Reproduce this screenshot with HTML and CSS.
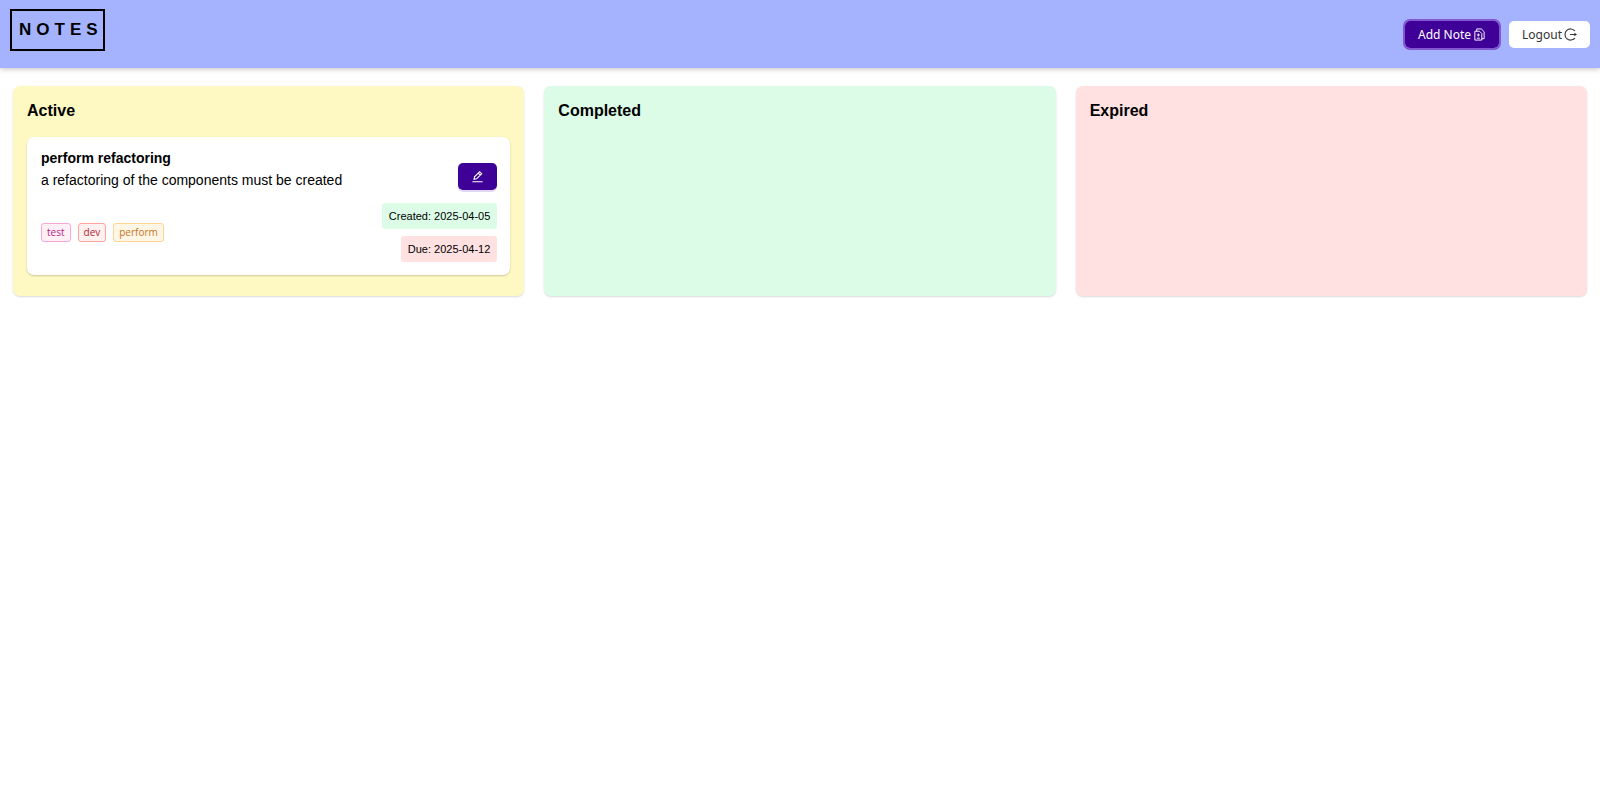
FILE: index.html
```html
<!DOCTYPE html>
<html lang="en">
<head>
<meta charset="utf-8">
<meta name="viewport" content="width=device-width, initial-scale=1">
<title>Notes</title>
<link rel="stylesheet" href="styles.css">
</head>
<body>
<header class="topbar">
  <h1 class="logo">NOTES</h1>
  <nav class="actions">
    <button type="button" class="btn btn-primary btn-active">Add Note
      <svg class="icon" viewBox="0 0 14 14" fill="none" stroke="currentColor" aria-hidden="true"><path d="M2 3.5H7L9.5 6V13H2ZM4 3.5V1H9L12 4V11.5H9.5M4.2 7.5H7.4M5.8 5.9V9.1M4.2 11H7.4"/></svg>
    </button>
    <button type="button" class="btn">Logout
      <svg class="icon" viewBox="0 0 14 14" fill="none" stroke="currentColor" stroke-width="1.2" aria-hidden="true"><path d="M11.7 3.2A6 6 0 1 0 11.7 10.8M6.5 7H12"/><path d="M11.2 5L14 7L11.2 9Z" fill="currentColor" stroke="none"/></svg>
    </button>
  </nav>
</header>
<main class="board">
  <section class="column column-active">
    <h2 class="column-title">Active</h2>
    <article class="card">
      <div class="card-row card-head">
        <div>
          <h3 class="card-title">perform refactoring</h3>
          <p>a refactoring of the components must be created</p>
        </div>
        <button type="button" class="btn btn-primary btn-edit" aria-label="Edit note">
          <svg class="icon" viewBox="0 0 14 14" fill="none" stroke="currentColor" stroke-width="1.2" aria-hidden="true"><path d="M1.5 12.7H12.5M3.3 10L3.8 7.3L9.3 1.8L11.5 4L6 9.5ZM7.8 3.3L10 5.5"/></svg>
        </button>
      </div>
      <div class="card-row card-foot">
        <ul class="tags">
          <li class="tag tag-magenta">test</li>
          <li class="tag tag-red">dev</li>
          <li class="tag tag-orange">perform</li>
        </ul>
        <div class="dates">
          <span class="date date-created">Created: 2025-04-05</span>
          <span class="date date-due">Due: 2025-04-12</span>
        </div>
      </div>
    </article>
  </section>
  <section class="column column-completed">
    <h2 class="column-title">Completed</h2>
  </section>
  <section class="column column-expired">
    <h2 class="column-title">Expired</h2>
  </section>
</main>
</body>
</html>
```
FILE: styles.css
```css
* {
  box-sizing: border-box;
  margin: 0;
}

body {
  background: #fff;
  color: #000;
  font: 14px/20px "Liberation Sans", Arial, sans-serif;
}

.topbar {
  display: flex;
  align-items: flex-start;
  justify-content: space-between;
  padding: 9px 10px 17px;
  background: #a5b3ff;
  box-shadow: 0 1px 5px rgba(0, 0, 0, 0.25);
}

.logo {
  padding: 7px 0 7px 7px;
  border: 2px solid #000;
  font-size: 17px;
  line-height: 24px;
  letter-spacing: 5px;
}

.actions {
  display: flex;
  gap: 10px;
  padding-top: 12px;
}

.btn {
  display: inline-flex;
  align-items: center;
  justify-content: center;
  gap: 2px;
  height: 27px;
  padding: 0 13px;
  border: 0;
  border-radius: 5px;
  background: #fff;
  color: #333;
  font: 12px/20px "Noto Sans", sans-serif;
  cursor: pointer;
}

.btn-primary {
  background: #3f0097;
  color: #fff;
  box-shadow: 0 2px 0 rgba(110, 60, 200, 0.2);
}

.btn-active {
  outline: 2px solid #8257cf;
}

.icon {
  width: 13px;
  height: 13px;
}

.board {
  display: grid;
  grid-template-columns: repeat(3, minmax(0, 1fr));
  gap: 20px;
  padding: 18px 13px;
}

.column {
  padding: 13px 14px 21px;
  border-radius: 7px;
  box-shadow: 0 1px 2px rgba(0, 0, 0, 0.15);
}

.column-active {
  background: #fef8c3;
}

.column-completed {
  background: #dcfce7;
}

.column-expired {
  background: #ffe1e1;
}

.column-title {
  margin-bottom: 14px;
  font-size: 16px;
  line-height: 24px;
}

.card {
  padding: 11px 13px 13px 14px;
  border-radius: 7px;
  background: #fff;
  box-shadow: 0 1px 2px rgba(0, 0, 0, 0.2);
}

.card-row {
  display: flex;
  align-items: center;
  justify-content: space-between;
}

.card-head {
  align-items: flex-end;
}

.card-foot {
  margin-top: 13px;
}

.card-title {
  margin-bottom: 2px;
  font-size: 14px;
  line-height: 20px;
}

.btn-edit {
  width: 39px;
}

.tags {
  display: flex;
  gap: 7px;
  padding: 0;
  list-style: none;
}

.tag {
  padding: 0 5px;
  border: 1px solid;
  border-radius: 3px;
  font: 10px/17px "Open Sans", sans-serif;
}

.tag-magenta {
  background: #fff0f6;
  border-color: #f5a8d4;
  color: #b81d86;
}

.tag-red {
  background: #fff1f0;
  border-color: #ffa39e;
  color: #b8202f;
}

.tag-orange {
  background: #fff7e6;
  border-color: #ffd591;
  color: #c8731c;
}

.dates {
  display: flex;
  flex-direction: column;
  align-items: flex-end;
  gap: 7px;
}

.date {
  padding: 3px 7px;
  border-radius: 3px;
  font-size: 11px;
  line-height: 20px;
}

.date-created {
  background: #dcfce7;
}

.date-due {
  background: #ffe1e1;
}
```
